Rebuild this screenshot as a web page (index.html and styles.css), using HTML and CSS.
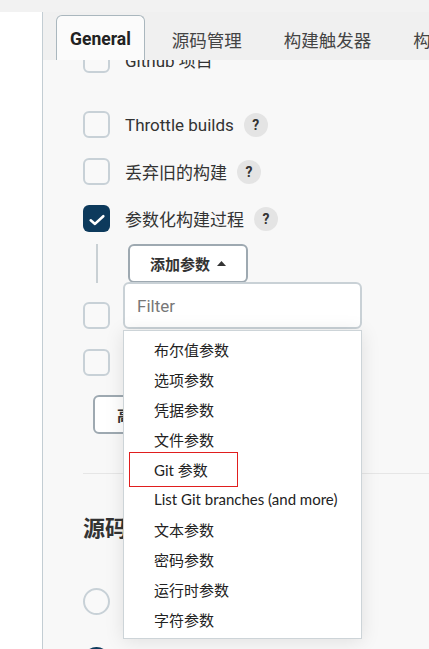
FILE: index.html
```html
<!DOCTYPE html>
<html lang="zh-CN">
<head>
<meta charset="utf-8">
<title>General</title>
<link rel="stylesheet" href="styles.css">
</head>
<body>
<div class="page">
  <aside class="side"></aside>
  <main class="main">
    <nav class="tabs">
      <span class="tab active">General</span>
      <span class="tab">源码管理</span>
      <span class="tab">构建触发器</span>
      <span class="tab">构建环境</span>
      <span class="tab">构建</span>
    </nav>
    <div class="content">
      <div class="row first"><span class="cb"></span><span class="label">Github 项目</span></div>
      <div class="row"><span class="cb"></span><span class="label">Throttle builds</span><span class="help">?</span></div>
      <div class="row"><span class="cb"></span><span class="label">丢弃旧的构建</span><span class="help">?</span></div>
      <div class="row"><span class="cb checked"><svg viewBox="0 0 27 27" width="27" height="27"><path d="M7.7 15.3 L12 18.9 L20.3 11.2" fill="none" stroke="#fff" stroke-width="2.6" stroke-linecap="round" stroke-linejoin="round"/></svg></span><span class="label">参数化构建过程</span><span class="help">?</span></div>
      <div class="nested">
        <button class="btn add">添加参数<svg class="caret" viewBox="0 0 9 5" width="9" height="5"><path d="M0 5 L4.5 0 L9 5 Z" fill="#333"/></svg></button>
        <div class="popup">
          <div class="filter">Filter</div>
          <ul class="menu">
            <li>布尔值参数</li>
            <li>选项参数</li>
            <li>凭据参数</li>
            <li>文件参数</li>
            <li class="marked">Git 参数</li>
            <li>List Git branches (and more)</li>
            <li>文本参数</li>
            <li>密码参数</li>
            <li>运行时参数</li>
            <li>字符参数</li>
          </ul>
        </div>
      </div>
      <div class="row after"><span class="cb"></span><span class="label">在必要的时候并发构建</span></div>
      <div class="row"><span class="cb"></span><span class="label">限制项目的运行节点</span></div>
      <button class="btn adv">高级</button>
      <hr class="sep">
      <h2 class="heading">源码管理</h2>
      <div class="row radio-row"><span class="radio"></span><span class="label">无</span></div>
      <div class="row radio-row"><span class="radio on"></span><span class="label">Git</span></div>
    </div>
  </main>
</div>
</body>
</html>
```
FILE: styles.css
```css
* { box-sizing: border-box; }
html, body { margin: 0; padding: 0; }
body {
  background: #f2f2f2;
  font-family: Roboto, "Noto Sans CJK SC", sans-serif;
  color: #333;
  width: 429px;
  height: 649px;
  overflow: hidden;
}
.page {
  display: flex;
  padding-top: 12px;
  height: 649px;
}
.side {
  width: 42px;
  flex: none;
  background: #fff;
}
.main {
  flex: 1;
  border-left: 1px solid #c3cdd3;
  background: #f8f8f8;
  overflow: hidden;
  min-width: 0;
}
.tabs {
  position: relative;
  z-index: 3;
  height: 48px;
  background: #f0f0f0;
  display: flex;
  align-items: flex-end;
  gap: 12px;
  padding-left: 13px;
  white-space: nowrap;
  overflow: hidden;
}
.tab {
  height: 45px;
  padding: 2px 14px 0;
  display: flex;
  align-items: center;
  font-size: 17.5px;
  color: #444;
  border: 1px solid transparent;
  border-bottom: none;
}
.tab.active {
  background: #fbfbfb;
  border-color: #aab7be;
  border-radius: 6px 6px 0 0;
  font-weight: 700;
  color: #222;
  padding: 2px 13px 0;
}
.content {
  padding-left: 40px;
}
.row {
  display: flex;
  align-items: center;
  height: 27px;
  margin-bottom: 20px;
  font-size: 17px;
  white-space: nowrap;
}
.row.first {
  margin-top: -14px;
  margin-bottom: 38px;
}
.cb {
  width: 27px;
  height: 27px;
  flex: none;
  border: 2px solid #c8d1d7;
  border-radius: 6px;
  background: #f9f9f9;
  margin-right: 15px;
}
.cb.checked {
  border: none;
  background: #0d3a5c;
}
.cb svg { display: block; }
.help {
  width: 24px;
  height: 24px;
  border-radius: 50%;
  background: #e4e4e4;
  margin-left: 10px;
  display: flex;
  align-items: center;
  justify-content: center;
  font-size: 14px;
  font-weight: 700;
  color: #333;
}
.nested {
  position: relative;
  margin: -8px 0 19px 13px;
  border-left: 2px solid #c9d0d4;
  padding-left: 30px;
  height: 39px;
}
.btn {
  height: 39px;
  border: 2px solid #9ea9b1;
  border-radius: 6px;
  background: #fff;
  font-family: inherit;
  color: #333;
  display: flex;
  align-items: center;
}
.add {
  padding: 0 20px;
  font-size: 15px;
  font-weight: 600;
}
.caret { margin-left: 7px; }
.adv {
  margin: -1px 0 0 10px;
  padding: 0 22px;
  font-size: 15px;
  font-weight: 600;
}
.popup {
  position: absolute;
  z-index: 5;
  left: 25px;
  top: calc(100% - 1px);
  width: 239px;
}
.filter {
  height: 47px;
  border: 2px solid #c9d1d6;
  border-radius: 6px;
  background: #fff;
  padding-left: 12px;
  display: flex;
  align-items: center;
  font-size: 17px;
  color: #777;
}
.menu {
  list-style: none;
  margin: 1px 0 0;
  padding: 3px 0 4px;
  background: #fff;
  border: 1px solid #cdd4d8;
  box-shadow: 0 2px 18px rgba(0, 0, 0, 0.1);
  font-family: Lato, "Noto Sans CJK SC", sans-serif;
}
.menu li {
  position: relative;
  height: 30px;
  padding-left: 30px;
  display: flex;
  align-items: center;
  font-size: 15px;
  color: #222;
  white-space: nowrap;
}
.menu li.marked::after {
  content: "";
  position: absolute;
  left: 5px;
  top: -2px;
  width: 107px;
  height: 33px;
  border: 1px solid #e01e1e;
}
.sep {
  margin: 39px 0 0;
  border: none;
  border-top: 1px solid #e6e6e6;
}
.heading {
  margin: 40px 0 44px;
  font-size: 22px;
  line-height: 30px;
  font-weight: 700;
  color: #333;
}
.radio-row { margin-bottom: 32px; }
.radio {
  width: 27px;
  height: 27px;
  flex: none;
  border-radius: 50%;
  border: 2px solid #c8d1d7;
  background: #f9f9f9;
  margin-right: 15px;
}
.radio.on {
  border: 7px solid #0d3a5c;
  background: #fff;
}
```
